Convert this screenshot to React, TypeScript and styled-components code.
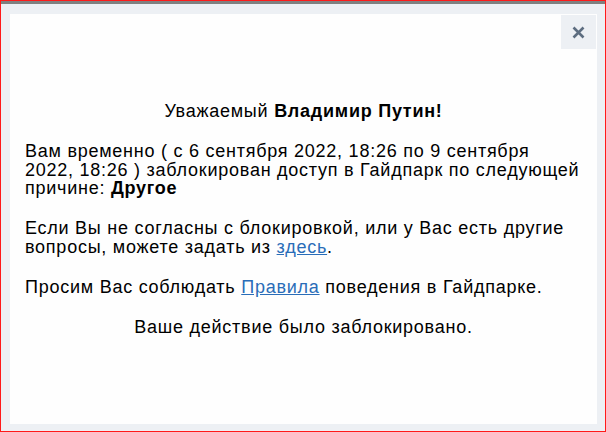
import React from 'react'
import styled, { createGlobalStyle } from 'styled-components'

const GlobalStyle = createGlobalStyle`
  html, body {
    margin: 0;
    padding: 0;
    background: #edf0f4;
  }
  * { box-sizing: border-box; }
`

const Frame = styled.div`
  width: 606px;
  height: 432px;
  border: 1px solid #ff1a1a;
  display: flex;
  flex-direction: column;
  background: #edf0f4;
`

const TopBar = styled.div`
  height: 3px;
  background: #808080;
  flex-shrink: 0;
`

const Backdrop = styled.div`
  flex: 1;
  display: flex;
  padding: 10px 8px 7px 9px;
`

const Panel = styled.div`
  position: relative;
  flex: 1;
  background: #fefefe;
  display: flex;
  flex-direction: column;
  justify-content: center;
  padding: 0 15px 0 15px;
  font-family: 'Liberation Sans', Arial, sans-serif;
  font-size: 18px;
  letter-spacing: 0.75px;
  line-height: 18.5px;
  color: #000;
`

const CloseButton = styled.button`
  position: absolute;
  top: 1px;
  right: 1px;
  width: 35px;
  height: 34px;
  border: 0;
  padding: 0;
  background: #edf0f4;
  display: flex;
  align-items: center;
  justify-content: center;
  cursor: pointer;
`

const Text = styled.p<{ $center?: boolean }>`
  margin: 0 0 21.5px;
  text-align: ${p => (p.$center ? 'center' : 'left')};
  &:last-child { margin-bottom: 0; }
`

const Link = styled.a`
  color: #2a6db8;
  text-decoration: underline;
`

export default function App() {
  return (
    <>
      <GlobalStyle />
      <Frame>
        <TopBar />
        <Backdrop>
          <Panel>
            <CloseButton aria-label="Закрыть">
              <svg width="13" height="13" viewBox="0 0 13 13">
                <path d="M1.5 1.5 L11.5 11.5 M11.5 1.5 L1.5 11.5" stroke="#5d6d80" strokeWidth="2.6" strokeLinecap="butt" />
              </svg>
            </CloseButton>
            <Text $center>
              Уважаемый <b>Владимир Путин!</b>
            </Text>
            <Text>
              Вам временно ( с 6 сентября 2022, 18:26 по 9 сентября 2022, 18:26 ) заблокирован доступ в Гайдпарк по следующей причине: <b>Другое</b>
            </Text>
            <Text>
              Если Вы не согласны с блокировкой, или у Вас есть другие вопросы, можете задать из <Link href="#">здесь</Link>.
            </Text>
            <Text>
              Просим Вас соблюдать <Link href="#">Правила</Link> поведения в Гайдпарке.
            </Text>
            <Text $center>Ваше действие было заблокировано.</Text>
          </Panel>
        </Backdrop>
      </Frame>
    </>
  )
}
